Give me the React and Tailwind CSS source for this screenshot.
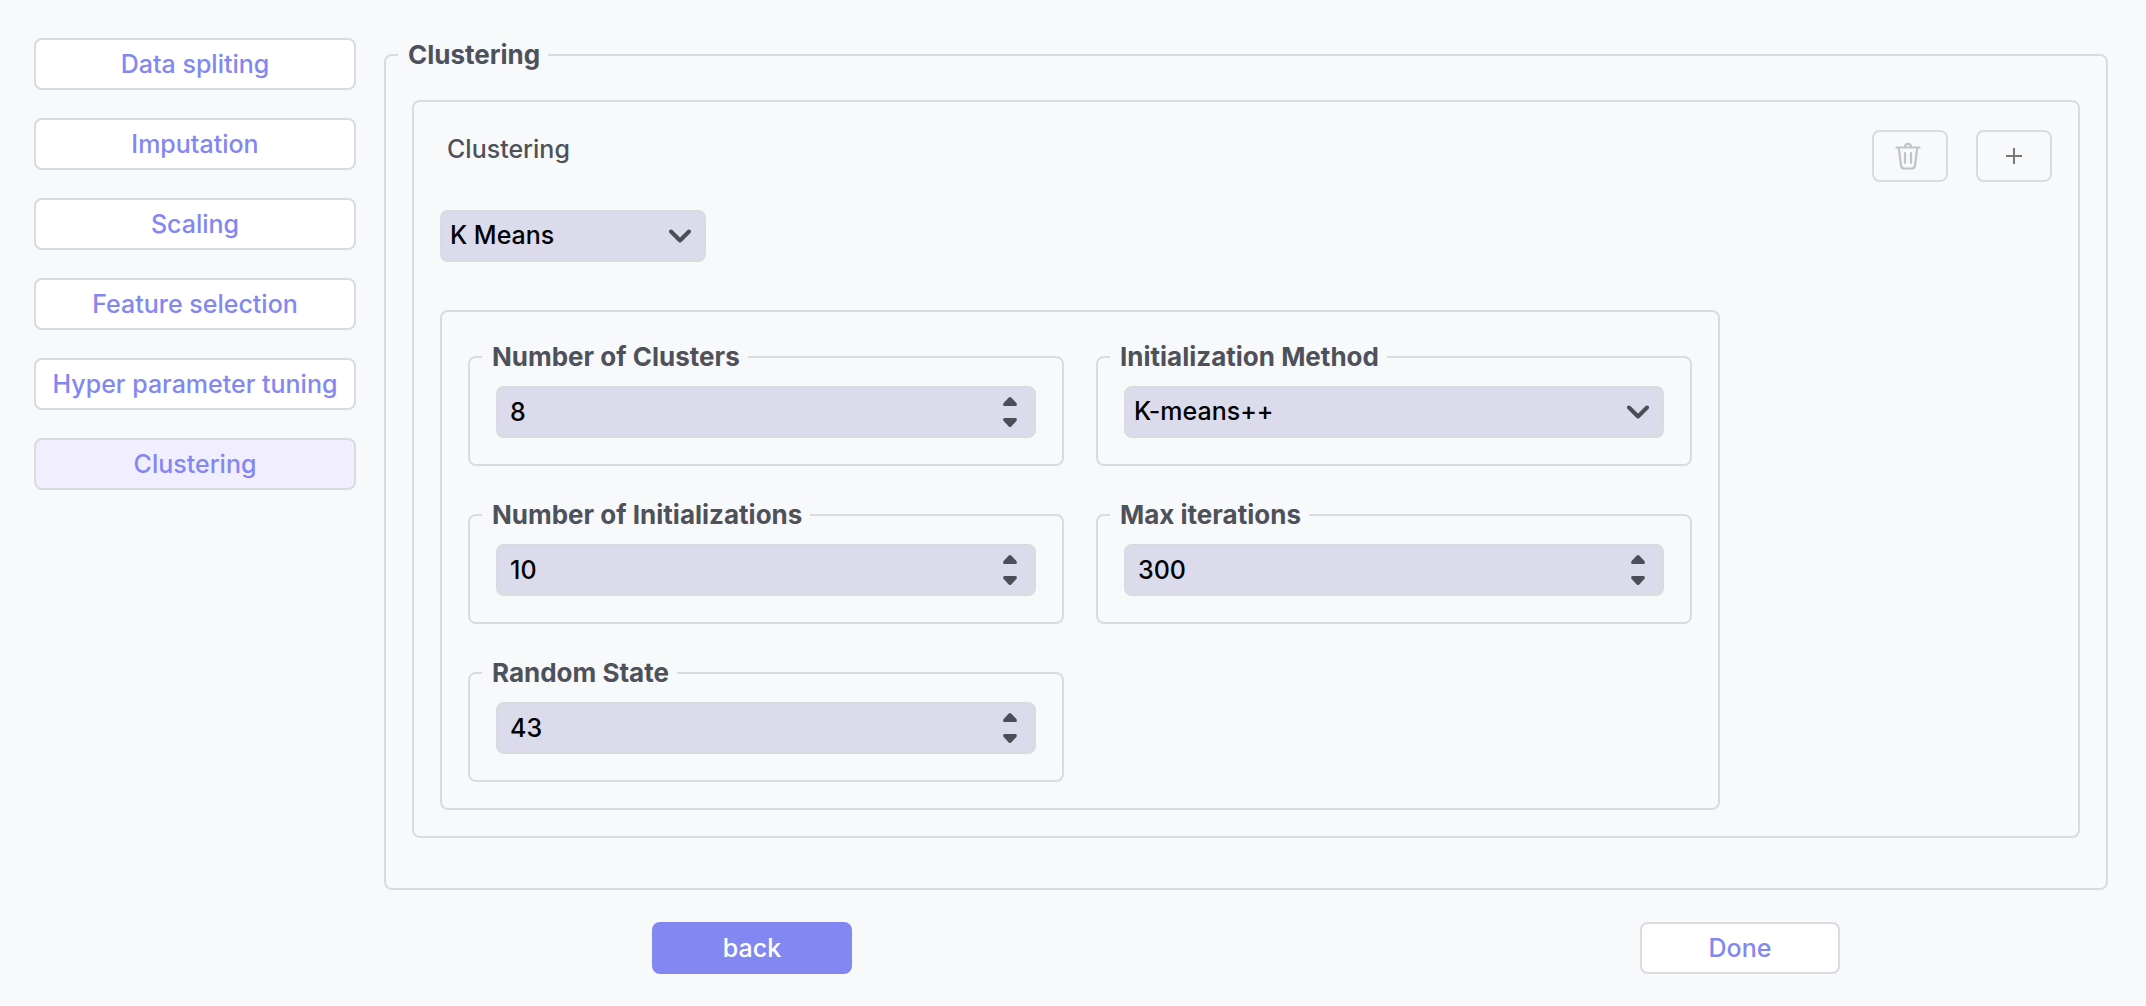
import { useState } from "react";

const steps = [
  "Data spliting",
  "Imputation",
  "Scaling",
  "Feature selection",
  "Hyper parameter tuning",
  "Clustering",
];

const control =
  "h-[52px] w-full appearance-none rounded-lg border-2 border-[#dadbdf] bg-[#dcdbec] text-[25px] font-medium text-black outline-none";

function Chevron() {
  return (
    <svg
      className="pointer-events-none absolute top-1/2 right-[15px] h-[14px] w-[22px] -translate-y-1/2"
      viewBox="0 0 22 14"
      fill="none"
      stroke="#4b4d57"
      strokeWidth="4"
      strokeLinecap="round"
      strokeLinejoin="round"
      aria-hidden="true"
    >
      <path d="M2 2.500 11 11.500 20 2.500" />
    </svg>
  );
}

function SelectBox({ id, label, options }) {
  return (
    <div className="relative w-full">
      <select id={id} aria-label={label} className={`${control} pr-12 pl-2`}>
        {options.map((o) => (
          <option key={o}>{o}</option>
        ))}
      </select>
      <Chevron />
    </div>
  );
}

function NumberBox({ id, label, initial }) {
  const [value, setValue] = useState(initial);
  return (
    <div className="relative w-full">
      <input
        id={id}
        aria-label={label}
        type="text"
        inputMode="numeric"
        value={value}
        onChange={(e) => setValue(e.target.value)}
        className={`${control} pr-14 pl-3`}
      />
      <div className="absolute top-1/2 right-[19px] flex -translate-y-1/2 flex-col gap-3">
        <button type="button" aria-label={`Increase ${label}`} onClick={() => setValue(String(Number(value) + 1))}>
          <svg className="block h-[9px] w-[14px]" viewBox="0 0 14 9" aria-hidden="true">
            <path d="M5.800.6Q7-.4 8.200.6L13.400 6Q14.700 8.600 12.500 9H1.500Q-.7 8.600.6 6Z" fill="#4b4d57" />
          </svg>
        </button>
        <button type="button" aria-label={`Decrease ${label}`} onClick={() => setValue(String(Number(value) - 1))}>
          <svg className="block h-[9px] w-[14px]" viewBox="0 0 14 9" aria-hidden="true">
            <path d="M5.800 8.400Q7 9.400 8.200 8.400L13.400 3Q14.700.4 12.500 0H1.500Q-.7.4.6 3Z" fill="#4b4d57" />
          </svg>
        </button>
      </div>
    </div>
  );
}

function Legend({ children }) {
  return (
    <legend className="-ml-[14px] pr-2 pl-[10px] text-[26px] leading-[30px] font-bold text-[#4f515a]">
      {children}
    </legend>
  );
}

function Field({ legend, children }) {
  return (
    <fieldset className="min-w-0 rounded-lg border-2 border-[#dadbdf] px-[26px] pt-[14px] pb-[26px]">
      <Legend>{legend}</Legend>
      {children}
    </fieldset>
  );
}

export default function App() {
  const [active, setActive] = useState("Clustering");
  return (
    <div className="flex min-h-screen items-start gap-7 bg-[#f8f9fb] pt-[38px] pr-[38px] pb-8 pl-[34px] font-['Inter',sans-serif] text-[25px]">
      <nav className="flex w-[322px] shrink-0 flex-col gap-7">
        {steps.map((s) => (
          <button
            key={s}
            type="button"
            onClick={() => setActive(s)}
            className={`h-[52px] rounded-lg border-2 border-[#dadbdf] pt-0.5 font-medium whitespace-nowrap text-[#8287f1] ${
              s === active ? "bg-[#f0eeff]" : "bg-white"
            }`}
          >
            {s}
          </button>
        ))}
      </nav>

      <main className="min-w-0 flex-1 pt-[2px]">
        <fieldset className="min-w-0 rounded-lg border-2 border-[#dadbdf] px-[26px] pt-[30px] pb-[50px]">
          <Legend>Clustering</Legend>
          <section className="rounded-lg border-2 border-[#dadbdf] px-[26px] pt-[28px] pb-[26px]">
            <div className="flex items-start justify-between">
              <h2 className="px-[7px] pt-1 leading-[30px] font-medium text-[#4f515a]">Clustering</h2>
              <div className="flex gap-7">
                <button
                  type="button"
                  disabled
                  aria-label="Delete"
                  className="flex h-[52px] w-[76px] items-center justify-center rounded-lg border-2 border-[#dadbdf] pr-1"
                >
                  <svg
                    className="h-[28px] w-[26px]"
                    viewBox="0 0 26 28"
                    fill="none"
                    stroke="#c2c3c4"
                    strokeWidth="2.2"
                    strokeLinecap="round"
                    strokeLinejoin="round"
                    aria-hidden="true"
                  >
                    <path d="M1.500 5.500h23M10 5C10 .800 16 .800 16 5M3.800 6l2.200 17.500Q6.400 26.500 9 26.500h8Q19.600 26.500 20 23.500L22.200 6M10 11v10M16 11v10" />
                  </svg>
                </button>
                <button
                  type="button"
                  aria-label="Add"
                  className="flex h-[52px] w-[76px] items-center justify-center rounded-lg border-2 border-[#dadbdf]"
                >
                  <svg className="h-[18px] w-[18px]" viewBox="0 0 18 18" stroke="#777" strokeWidth="2" aria-hidden="true">
                    <path d="M1 9h16M9 1v16" />
                  </svg>
                </button>
              </div>
            </div>

            <div className="mt-7 w-[266px]">
              <SelectBox id="algorithm" label="Algorithm" options={["K Means"]} />
            </div>

            <div className="mt-12 grid w-full max-w-[1280px] grid-cols-2 gap-x-8 gap-y-[34px] rounded-lg border-2 border-[#dadbdf] px-[26px] pt-[30px] pb-[26px]">
              <Field legend="Number of Clusters">
                <NumberBox id="clusters" label="Number of Clusters" initial="8" />
              </Field>
              <Field legend="Initialization Method">
                <SelectBox id="init" label="Initialization Method" options={["K-means++"]} />
              </Field>
              <Field legend="Number of Initializations">
                <NumberBox id="inits" label="Number of Initializations" initial="10" />
              </Field>
              <Field legend="Max iterations">
                <NumberBox id="iterations" label="Max iterations" initial="300" />
              </Field>
              <Field legend="Random State">
                <NumberBox id="random" label="Random State" initial="43" />
              </Field>
            </div>
          </section>
        </fieldset>

        <div className="mt-8 flex justify-between px-[268px]">
          <button type="button" className="h-[52px] w-[200px] rounded-lg bg-[#8287f1] pt-0.5 font-medium text-white">
            back
          </button>
          <button
            type="button"
            className="h-[52px] w-[200px] rounded-lg border-2 border-[#dadbdf] bg-white pt-0.5 font-medium text-[#8287f1]"
          >
            Done
          </button>
        </div>
      </main>
    </div>
  );
}
